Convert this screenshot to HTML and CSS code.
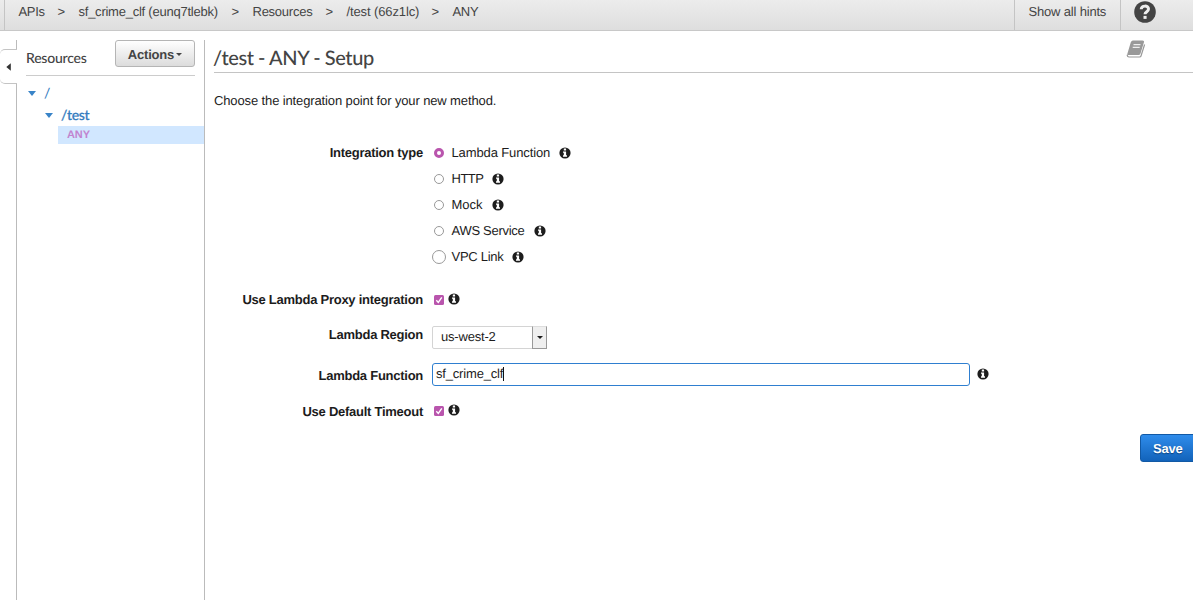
FILE: index.html
```
<!DOCTYPE html>
<html lang="en">
<head>
<meta charset="utf-8">
<title>API Gateway</title>
<link rel="stylesheet" href="styles.css">
</head>
<body>
<svg width="0" height="0" class="defs">
  <symbol id="info" viewBox="0 0 12 12"><circle cx="6" cy="6" r="5.600" fill="#1d1d1d"/><path fill="#fff" d="M4.800 1.600h2.300v1.900H4.800zM4 4.400h3.100v3.900H8v1.400H4V8.300h.8V5.800H4z"/></symbol>
</svg>
<header class="topbar">
  <nav class="crumbs">
    <span class="c-apis">APIs</span><span class="sep">&gt;</span><span class="c-name">sf_crime_clf (eunq7tlebk)</span><span class="sep">&gt;</span><span class="c-res">Resources</span><span class="sep">&gt;</span><span class="c-test">/test (66z1lc)</span><span class="sep">&gt;</span><span class="c-any">ANY</span>
  </nav>
  <div class="hints"><span>Show all hints</span></div>
  <div class="help">
    <svg width="22" height="22" viewBox="0 0 22 22"><circle cx="11" cy="11" r="10.800" fill="#444"/><path d="M7.200 8.300C7.400 4.200 14.500 4 14.500 8.100c0 2.700-3.500 2.500-3.500 5.200" fill="none" stroke="#eee" stroke-width="3"/><path d="M9.500 14.900h3.100v3H9.500z" fill="#eee"/></svg>
  </div>
</header>
<div class="body">
  <div class="rail">
    <div class="rail-top"></div>
    <div class="tab"><svg width="5" height="8" viewBox="0 0 5 8"><path d="M4.800 .3v7.400L.3 4z" fill="#333"/></svg></div>
    <div class="rail-line"></div>
  </div>
  <aside class="sidebar">
    <div class="side-head"><span class="side-title">Resources</span><button class="actions"><span>Actions</span><i class="caret"></i></button></div>
    <div class="tree">
      <div class="node root"><i class="arrow"></i><span>/</span></div>
      <div class="node child"><i class="arrow"></i><span>/test</span></div>
      <div class="method"><span>ANY</span></div>
    </div>
  </aside>
  <main class="main">
    <div class="title-row">
      <h1><span>/test - ANY - Setup</span></h1>
      <svg class="book" width="20" height="19" viewBox="0 0 20 19"><path d="M6.300 1H16.500q1.200 0 .8 1.300L13.800 13.500q-.3 1-1.400 1H2.300q-1.300 0-1 1.200.2 1.300 1.600 1.300h10.600q1.200 0 1.500-1L18.600 4.500" fill="none" stroke="#999" stroke-width="1.200"/><path d="M6.300 1h10.200q1.200 0 .8 1.300L13.800 14H1.300L4.800 2.300Q5.200 1 6.300 1z" fill="#999"/><path d="M7.500 4.600h7M6.700 7.400h7" stroke="#eee" stroke-width="1.200"/></svg>
    </div>
    <p class="intro"><span>Choose the integration point for your new method.</span></p>
    <div class="form">
      <div class="row types">
        <label class="lbl">Integration type</label>
        <div class="options">
          <div class="opt"><i class="radio on"></i><span>Lambda Function</span><svg class="info"><use href="#info"/></svg></div>
          <div class="opt tight"><i class="radio"></i><span>HTTP</span><svg class="info"><use href="#info"/></svg></div>
          <div class="opt mock"><i class="radio"></i><span>Mock</span><svg class="info"><use href="#info"/></svg></div>
          <div class="opt snug"><i class="radio"></i><span>AWS Service</span><svg class="info"><use href="#info"/></svg></div>
          <div class="opt snug"><i class="radio big"></i><span>VPC Link</span><svg class="info"><use href="#info"/></svg></div>
        </div>
      </div>
      <div class="row proxy">
        <label class="lbl">Use Lambda Proxy integration</label>
        <svg class="check" viewBox="0 0 10 10"><rect width="10" height="10" rx="1.500" fill="#b955ad"/><path d="M2.300 5.200l2 2.200 3.500-5" fill="none" stroke="#fff" stroke-width="1.400"/></svg><svg class="info"><use href="#info"/></svg>
      </div>
      <div class="row region">
        <label class="lbl">Lambda Region</label>
        <div class="select"><span>us-west-2</span><b><i class="caret"></i></b></div>
      </div>
      <div class="row function">
        <label class="lbl">Lambda Function</label>
        <div class="input"><span>sf_crime_clf</span><i class="cursor"></i></div><svg class="info"><use href="#info"/></svg>
      </div>
      <div class="row timeout">
        <label class="lbl">Use Default Timeout</label>
        <svg class="check" viewBox="0 0 10 10"><rect width="10" height="10" rx="1.500" fill="#b955ad"/><path d="M2.300 5.200l2 2.200 3.500-5" fill="none" stroke="#fff" stroke-width="1.400"/></svg><svg class="info"><use href="#info"/></svg>
      </div>
    </div>
    <div class="footer"><button class="save">Save</button></div>
  </main>
</div>
</body>
</html>
```
FILE: styles.css
```
* { box-sizing: border-box; }
body { margin: 0; height: 600px; overflow: hidden; background: #fff; color: #1c1c1c; font: 13px/18px "Liberation Sans", Arial, sans-serif; text-rendering: geometricPrecision; display: flex; flex-direction: column; }
button { font: inherit; text-rendering: inherit; }
span, label { white-space: nowrap; }
.defs { display: none; }

.topbar { flex: none; height: 31px; display: flex; background: linear-gradient(#ececec, #dedede); border-bottom: 1px solid #c8c8c8; color: #444; }
.crumbs { flex: 1; margin-left: 4px; border-left: 1px solid #c4c4c4; padding: 3px 0 0 13.5px; display: flex; }
.sep { width: 8px; margin: 0 13px; }
.c-apis { width: 26px; letter-spacing: -.3px; }
.c-name { width: 140px; letter-spacing: -.24px; }
.c-res { width: 60px; letter-spacing: -.25px; }
.c-test { width: 72px; letter-spacing: -.12px; }
.c-any { letter-spacing: -.3px; }
.hints { width: 106px; border-left: 1px solid #c4c4c4; padding: 3px 0 0 13.5px; letter-spacing: -.18px; }
.help { width: 73px; border-left: 1px solid #c4c4c4; padding: 1px 0 0 13px; }
.help svg { display: block; }

.body { flex: 1; display: flex; padding-top: 9px; }
.rail { width: 17px; display: flex; flex-direction: column; }
.rail-top { height: 9px; border-right: 1px solid #bbb; }
.tab { height: 35px; width: 17px; border: 1px solid #c4c4c4; border-width: 1px 0; border-radius: 5px 0 0 5px; padding: 13px 0 0 6px; }
.tab svg { display: block; }
.rail-line { flex: 1; border-right: 1px solid #bbb; }

.sidebar { width: 188px; border-right: 1px solid #bbb; }
.side-head { height: 36px; margin: 0 9px; border-bottom: 1px solid #ccc; display: flex; justify-content: space-between; align-items: flex-start; }
.side-title { font: 500 14px/18px Lato, sans-serif; color: #444; padding-top: 9px; letter-spacing: -.22px; }
.actions { width: 80px; height: 27px; border: 1px solid #b5b5b5; border-radius: 3px; background: linear-gradient(#fff, #dcdcdc); color: #444; font-weight: bold; display: flex; align-items: center; justify-content: center; padding: 2px 0 0; gap: 2px; letter-spacing: -.2px; }
.caret { border: 3px solid transparent; border-top-color: currentColor; border-bottom: 0; }
.tree { padding-top: 6px; color: #357cc0; }
.node { display: flex; align-items: center; height: 22px; font: 500 14px/22px Lato, sans-serif; letter-spacing: -.3px; }
.root { padding-left: 11px; gap: 8px; }
.child { padding-left: 28px; gap: 8px; }
.child span { -webkit-text-stroke: .25px currentColor; }
.arrow { border: 4px solid transparent; border-top: 5px solid #3984c8; border-bottom: 0; margin-top: 1px; }
.method { height: 18px; margin-left: 41px; padding-left: 9px; background: #d1e7ff; color: #c184cf; font: bold 11px/19px "Liberation Sans", Arial, sans-serif; letter-spacing: -.1px; }

.main { flex: 1; padding-left: 9px; display: flex; flex-direction: column; }
.title-row { height: 33px; border-bottom: 1px solid #c4c4c4; display: flex; justify-content: space-between; }
h1 { margin: 0 0 0 -1px; font: 500 20px/36px Lato, sans-serif; color: #444; letter-spacing: -.42px; }
.book { margin-right: 47px; }
.intro { margin: 19px 0 0; height: 18px; letter-spacing: -.125px; }
.form { margin-top: 34px; }
.row { display: flex; align-items: center; }
.lbl { width: 209px; display: flex; justify-content: flex-end; font-weight: bold; margin-right: 9px; letter-spacing: -.26px; }
.types { align-items: flex-start; }
.opt { height: 26px; display: flex; align-items: flex-start; letter-spacing: -.12px; }
.opt.tight { letter-spacing: -.5px; }
.opt.mock { letter-spacing: 0; }
.opt.snug { letter-spacing: -.28px; }
.radio { width: 10px; height: 10px; border: 1px solid #999; border-radius: 50%; margin: 4px 7.5px 0 2px; }
.radio.on { border: 3px solid #b955ad; }
.radio.big { width: 14px; height: 14px; margin: 2px 5.5px 0 0; }
.info { width: 12px; height: 12px; flex: none; }
.opt .info { margin: 2.5px 0 0 9px; }
.check { width: 10px; height: 10px; margin: 0 4px 0 2px; }
.proxy { height: 18px; margin-top: 17px; }
.proxy .info, .timeout .info { margin-top: -2px; margin-left: -.5px; }
.region { height: 23px; margin-top: 17px; }
.region .lbl { margin-bottom: 5px; }
.select { width: 115px; height: 23px; border: 1px solid #d4d4d4; border-radius: 2px; display: flex; justify-content: space-between; line-height: 20px; padding-left: 8px; letter-spacing: -.2px; }
.select b { width: 15px; border: 1px solid #999; border-top-color: #ddd; background: #efefef; display: flex; align-items: center; justify-content: center; margin: -1px -1px -1px 0; }
.function { height: 23px; margin-top: 14px; }
.function .lbl { margin-top: 3px; }
.input { width: 538px; height: 23px; border: 1px solid #2f7fd0; border-radius: 3px; padding-left: 3px; line-height: 20px; display: flex; letter-spacing: -.18px; }
.cursor { width: 1px; height: 14px; background: #111; margin-top: 3px; }
.function .info { margin: -2px 0 0 7px; }
.timeout { height: 18px; margin-top: 16px; }
.timeout .lbl { margin-top: 2px; }
.footer { display: flex; justify-content: flex-end; margin-top: 14px; }
.save { width: 60px; margin-right: -7px; height: 28px; border: 1px solid #1259a5; border-radius: 3px; background: linear-gradient(#2f8ceb, #1263ba); color: #fff; font-weight: bold; text-shadow: 0 1px 1px #0a4280; text-align: left; padding: 1px 0 0 12px; letter-spacing: -.2px; }
```
